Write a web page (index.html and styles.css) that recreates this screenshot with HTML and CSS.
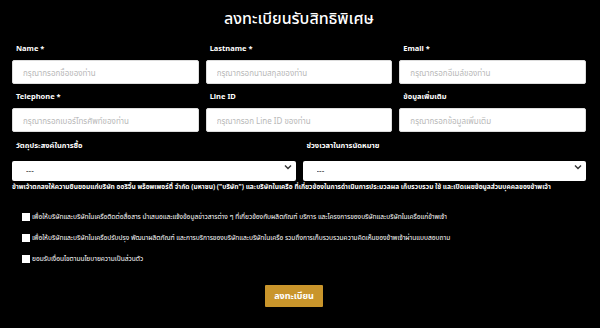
FILE: index.html
```html
<!DOCTYPE html>
<html lang="th">
<head>
<meta charset="utf-8">
<link rel="stylesheet" href="styles.css">
</head>
<body>
<div class="wrap">
  <h1 class="title">ลงทะเบียนรับสิทธิพิเศษ</h1>
  <div class="grid3">
    <div class="field"><label class="lbl">Name *</label><input class="inp" placeholder="กรุณากรอกชื่อของท่าน"></div>
    <div class="field"><label class="lbl">Lastname *</label><input class="inp" placeholder="กรุณากรอกนามสกุลของท่าน"></div>
    <div class="field"><label class="lbl">Email *</label><input class="inp" placeholder="กรุณากรอกอีเมล์ของท่าน"></div>
    <div class="field"><label class="lbl">Telephone *</label><input class="inp" placeholder="กรุณากรอกเบอร์โทรศัพท์ของท่าน"></div>
    <div class="field"><label class="lbl">Line ID</label><input class="inp" placeholder="กรุณากรอก Line ID ของท่าน"></div>
    <div class="field"><label class="lbl">ข้อมูลเพิ่มเติม</label><input class="inp" placeholder="กรุณากรอกข้อมูลเพิ่มเติม"></div>
  </div>
  <div class="grid2">
    <div class="field"><label class="lbl">วัตถุประสงค์ในการซื้อ</label>
      <div class="selwrap"><select class="sel"><option>---</option></select>
        <svg class="chev" width="8" height="6" viewBox="0 0 8 6"><path d="M1 1.5 L4 4.5 L7 1.5" fill="none" stroke="#333" stroke-width="1.4"/></svg></div>
    </div>
    <div class="field"><label class="lbl">ช่วงเวลาในการนัดหมาย</label>
      <div class="selwrap"><select class="sel"><option>---</option></select>
        <svg class="chev" width="8" height="6" viewBox="0 0 8 6"><path d="M1 1.5 L4 4.5 L7 1.5" fill="none" stroke="#333" stroke-width="1.4"/></svg></div>
    </div>
  </div>
  <p class="consent">ข้าพเจ้าตกลงให้ความยินยอมแก่บริษัท ออริจิ้น พร็อพเพอร์ตี้ จำกัด (มหาชน) ("บริษัท") และบริษัทในเครือ ที่เกี่ยวข้องในการดำเนินการประมวลผล เก็บรวบรวม ใช้ และเปิดเผยข้อมูลส่วนบุคคลของข้าพเจ้า</p>
  <div class="checks">
    <label class="chk"><input type="checkbox" class="box"><span>เพื่อให้บริษัทและบริษัทในเครือติดต่อสื่อสาร นำเสนอและแจ้งข้อมูลข่าวสารต่าง ๆ ที่เกี่ยวข้องกับผลิตภัณฑ์ บริการ และโครงการของบริษัทและบริษัทในเครือแก่ข้าพเจ้า</span></label>
    <label class="chk"><input type="checkbox" class="box"><span>เพื่อให้บริษัทและบริษัทในเครือปรับปรุง พัฒนาผลิตภัณฑ์ และการบริการของบริษัทและบริษัทในเครือ รวมถึงการเก็บรวบรวมความคิดเห็นของข้าพเจ้าผ่านแบบสอบถาม</span></label>
    <label class="chk"><input type="checkbox" class="box"><span>ยอมรับเงื่อนไขตามนโยบายความเป็นส่วนตัว</span></label>
  </div>
  <div class="btnrow"><button class="btn">ลงทะเบียน</button></div>
</div>
</body>
</html>
```
FILE: styles.css
```css
html, body {
  margin: 0;
  padding: 0;
  background: #000;
  color: #fff;
  font-family: "Noto Sans", "Noto Sans Thai", "Noto Sans Thai UI", "DejaVu Sans", sans-serif;
}
.wrap {
  width: 600px;
  height: 328px;
  padding: 6px 14px 0 12px;
  box-sizing: border-box;
}
.title {
  margin: 0;
  font-size: 16px;
  line-height: 24px;
  font-weight: 500;
  text-align: center;
}
.grid3 {
  margin-top: 12px;
  display: grid;
  grid-template-columns: 1fr 1fr 1fr;
  column-gap: 7px;
  row-gap: 6px;
}
.grid2 {
  margin-top: 7px;
  display: grid;
  grid-template-columns: 1fr 1fr;
  column-gap: 7px;
}
.field {
  display: flex;
  flex-direction: column;
  gap: 6px;
}
.lbl {
  font-size: 7.5px;
  line-height: 12px;
  font-weight: 700;
  padding-left: 4px;
}
.inp {
  height: 24px;
  box-sizing: border-box;
  border: 1px solid #ddd;
  border-radius: 2px;
  background: #fff;
  padding: 0 10px;
  font-family: inherit;
  font-size: 8px;
  outline: none;
}
.inp::placeholder {
  color: #b8b8b8;
}
.selwrap {
  position: relative;
  height: 20px;
}
.sel {
  appearance: none;
  -webkit-appearance: none;
  width: 100%;
  height: 20px;
  box-sizing: border-box;
  border: 0;
  border-radius: 2px;
  background: #fff;
  padding: 0 14px;
  font-family: inherit;
  font-size: 8px;
  color: #333;
  outline: none;
}
.chev {
  position: absolute;
  right: 4px;
  top: 7px;
}
.consent {
  margin: 4px 0 0;
  font-size: 6.6px;
  line-height: 12px;
  font-weight: 700;
  white-space: nowrap;
}
.checks {
  margin-top: 18px;
  padding-left: 10px;
  display: flex;
  flex-direction: column;
  gap: 9px;
}
.chk {
  display: flex;
  align-items: center;
  gap: 2px;
  font-size: 6.6px;
  line-height: 12px;
  white-space: nowrap;
}
.box {
  appearance: none;
  -webkit-appearance: none;
  margin: 0;
  width: 8px;
  height: 8px;
  background: #fff;
  border: 0;
  border-radius: 0;
}
.btnrow {
  margin-top: 20px;
  display: flex;
  justify-content: center;
  padding-right: 10px;
}
.btn {
  width: 58px;
  height: 22px;
  border: 0;
  border-radius: 1px;
  background: #c9952b;
  color: #fff;
  font-family: inherit;
  font-size: 9px;
  font-weight: 700;
  padding: 0;
}
```
